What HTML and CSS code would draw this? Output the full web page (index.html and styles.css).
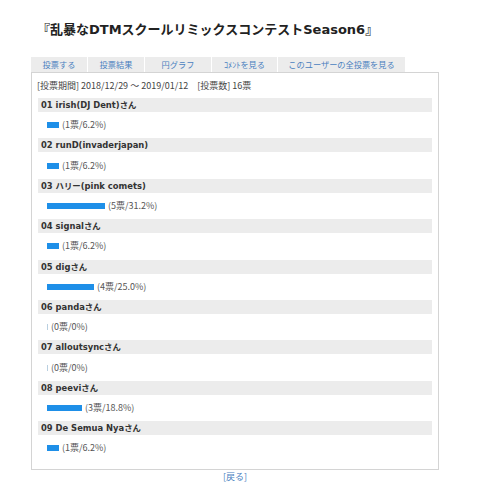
FILE: index.html
```html
<!DOCTYPE html>
<html lang="ja">
<head>
    <meta charset="UTF-8">
    <title>投票結果</title>
    <link rel="stylesheet" href="styles.css">
</head>
<body>
    <div class="page">
        <h1>『乱暴なDTMスクールリミックスコンテストSeason6』</h1>
        <ul class="tabs">
            <li class="t1"><a href="#">投票する</a></li>
            <li class="t2"><a href="#">投票結果</a></li>
            <li class="t3"><a href="#">円グラフ</a></li>
            <li class="t4"><a href="#">ｺﾒﾝﾄを見る</a></li>
            <li class="t5"><a href="#">このユーザーの全投票を見る</a></li>
        </ul>
        <div class="box">
            <p class="info">[投票期間] 2018/12/29 ～ 2019/01/12　[投票数] 16票</p>

            <div class="item">
                <div class="name">01 irish(DJ Dent)さん</div>
                <div class="result"><span class="bar" style="width:12px"></span>(1票/6.2%)</div>
            </div>
            <div class="item">
                <div class="name">02 runD(invaderjapan)</div>
                <div class="result"><span class="bar" style="width:12px"></span>(1票/6.2%)</div>
            </div>
            <div class="item">
                <div class="name">03 ハリー(pink comets)</div>
                <div class="result"><span class="bar" style="width:58px"></span>(5票/31.2%)</div>
            </div>
            <div class="item">
                <div class="name">04 signalさん</div>
                <div class="result"><span class="bar" style="width:12px"></span>(1票/6.2%)</div>
            </div>
            <div class="item">
                <div class="name">05 digさん</div>
                <div class="result"><span class="bar" style="width:47px"></span>(4票/25.0%)</div>
            </div>
            <div class="item">
                <div class="name">06 pandaさん</div>
                <div class="result"><span class="bar zero"></span>(0票/0%)</div>
            </div>
            <div class="item">
                <div class="name">07 alloutsyncさん</div>
                <div class="result"><span class="bar zero"></span>(0票/0%)</div>
            </div>
            <div class="item">
                <div class="name">08 peeviさん</div>
                <div class="result"><span class="bar" style="width:35px"></span>(3票/18.8%)</div>
            </div>
            <div class="item">
                <div class="name">09 De Semua Nyaさん</div>
                <div class="result"><span class="bar" style="width:12px"></span>(1票/6.2%)</div>
            </div>
        </div>
        <p class="back"><a href="#">[戻る]</a></p>
    </div>
</body>
</html>
```

FILE: styles.css
```css
body {
    margin: 0;
    background: #fff;
    font-family: "Noto Sans CJK JP", "DejaVu Sans", sans-serif;
    font-size: 9px;
    color: #555;
}
a {
    color: #4a7fbf;
    text-decoration: none;
}
.page {
    width: 408px;
    padding: 20px 0 0 31px;
}
h1 {
    margin: 0 0 17px 6px;
    font-family: "DejaVu Sans", "Noto Sans CJK JP", sans-serif;
    font-size: 13px;
    line-height: 20px;
    color: #222;
}
.tabs {
    display: flex;
    margin: 0;
    padding: 0;
    list-style: none;
    font-size: 8.2px;
}
.tabs li {
    height: 15px;
    line-height: 15px;
    text-align: center;
    background: #ececec;
    border-right: 1px solid #fff;
}
.tabs .t1 { width: 56px; }
.tabs .t2 { width: 56px; }
.tabs .t3 { width: 66px; }
.tabs .t4 { width: 65px; }
.tabs .t5 { width: 127px; border-right: none; }

.box {
    border: 1px solid #d4d4d4;
    padding: 6px 6px 7px;
}
.info {
    margin: 0 0 6px -1px;
    line-height: 13px;
    color: #444;
}
.name {
    height: 14px;
    line-height: 14px;
    padding-left: 3px;
    background: #ececec;
    font-family: "DejaVu Sans", "Noto Sans CJK JP", sans-serif;
    font-size: 8.4px;
    font-weight: bold;
    color: #333;
}
.result {
    display: flex;
    align-items: center;
    height: 26.4px;
    line-height: 12px;
    padding-left: 9px;
}
.bar {
    display: inline-block;
    height: 6px;
    margin-right: 3px;
    background: #1e8fe8;
}
.bar.zero {
    width: 1px;
    background: #b9cfe0;
}
.back {
    margin: 1px 0 0;
    text-align: center;
    line-height: 12px;
}
```
